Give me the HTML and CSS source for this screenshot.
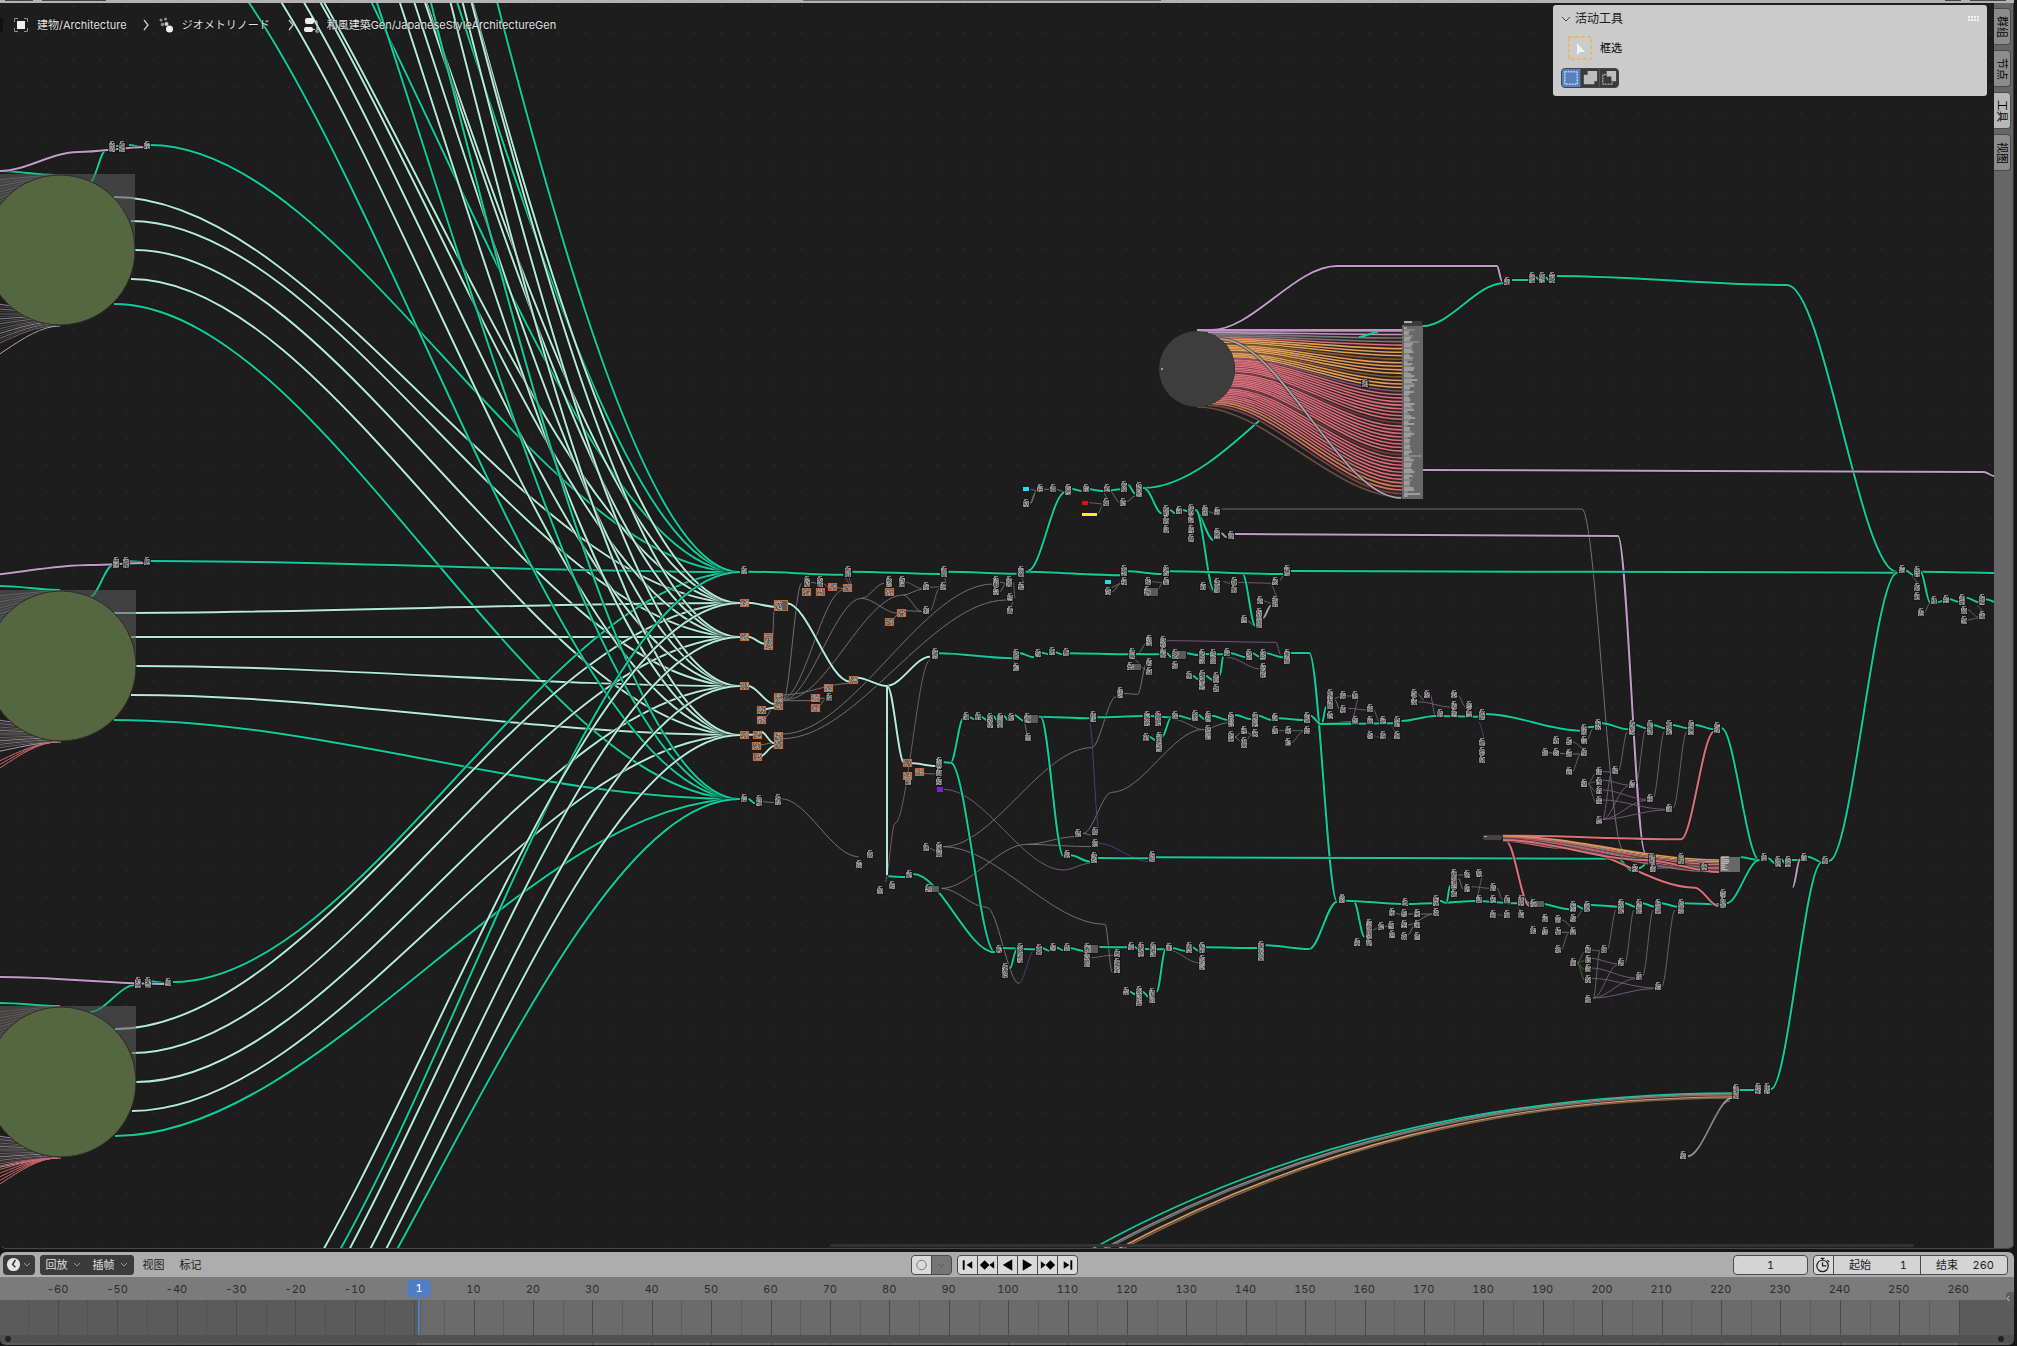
FILE: index.html
```html
<!DOCTYPE html>
<html lang="zh-CN">
<head>
<meta charset="utf-8">
<title>Geometry Nodes</title>
<link rel="stylesheet" href="styles.css">
</head>
<body>
<div class="topbar"><i class="stub stub-a"></i><i class="stub stub-b"></i><i class="stub stub-c"></i><i class="stub stub-d"></i><i class="stub stub-e"></i></div>

<main class="editor">
  <section class="canvas">
    <svg class="graph" id="graph" aria-hidden="true"></svg>
    <nav class="crumbs" lang="ja">
      <i class="edge"></i>
      <a href="#object"><svg class="icon" viewBox="0 0 16 16"><path d="M1.5 5V1.5H5M11 1.5h3.500V5M14.500 11v3.500H11M5 14.500H1.500V11" fill="none" stroke="#8f8f8f"/><rect x="4" y="4" width="8" height="8" fill="#eee"/></svg><span>建物/Architecture</span></a>
      <svg class="sep" viewBox="0 0 8 12"><path d="M2 1l4 5-4 5" fill="none" stroke="#ccc" stroke-width="1.300"/></svg>
      <a href="#modifier"><svg class="icon" viewBox="0 0 16 16"><g fill="#8c8c8c"><circle cx="3" cy="3" r="1.500"/><circle cx="7.500" cy="2" r="1.500"/><circle cx="4.500" cy="7.500" r="1.800"/></g><circle cx="8.500" cy="7" r="2" fill="#ccc"/><circle cx="11.500" cy="12" r="3.500" fill="#eee"/></svg><span>ジオメトリノード</span></a>
      <svg class="sep sep-far" viewBox="0 0 8 12"><path d="M2 1l4 5-4 5" fill="none" stroke="#ccc" stroke-width="1.300"/></svg>
      <a href="#tree"><svg class="icon" viewBox="0 0 16 16"><rect x="2" y="1" width="9" height="6" rx="2" fill="#eee"/><rect x="1" y="10" width="9" height="5" rx="2" fill="#eee"/><path d="M11 4h3v5M10 12.500h2M13 11h2v2h-2v2h3" fill="none" stroke="#ccc"/></svg><span>和風建築Gen/JapaneseStyleArchitectureGen</span></a>
    </nav>
    <aside class="panel">
      <h2><svg class="chev" viewBox="0 0 10 8"><path d="M1 2l4 4 4-4" fill="none" stroke="#444"/></svg>活动工具<i class="grip"></i></h2>
      <p class="tool"><svg class="tool-icon" viewBox="0 0 24 24"><rect x="1" y="1" width="22" height="22" fill="none" stroke="#f0b256" stroke-width="1.500" stroke-dasharray="4 2"/><path d="M9 7v12l3-3h5z" fill="#f2f2f2"/></svg>框选</p>
      <div class="modes">
        <button type="button" class="on" title="Set"><svg viewBox="0 0 19 19"><rect x="3" y="3" width="13" height="13" fill="none" stroke="#fff" stroke-dasharray="2 1"/></svg></button>
        <button type="button" title="Extend"><svg viewBox="0 0 19 19"><path d="M7 2h10v11h-3v3H3V6h4z" fill="#bdbdbd"/></svg></button>
        <button type="button" title="Subtract"><svg viewBox="0 0 19 19"><path d="M7 2h10v11h-5V8H7z" fill="#bdbdbd"/><path d="M6 6H3v10h10v-2" fill="none" stroke="#ddd" stroke-dasharray="2 1"/></svg></button>
      </div>
    </aside>
    <i class="hscroll"></i>
  </section>
  <div class="tabs">
    <button type="button">群组</button><button type="button">节点</button><button type="button" class="on">工具</button><button type="button">视图</button>
  </div>
</main>

<section class="timeline">
  <header class="bar">
    <div class="menus">
      <button type="button" class="dark kind" title="Editor type"><svg class="clock" viewBox="0 0 16 16"><circle cx="8" cy="8" r="7" fill="#e6e6e6"/><path d="M10 3L7 8l3 3" fill="none" stroke="#333" stroke-width="1.600"/></svg><svg class="chev" viewBox="0 0 10 8"><path d="M2 2l3 3 3-3" fill="none" stroke="#999"/></svg></button>
      <div class="pair">
        <button type="button" class="dark">回放<svg class="chev" viewBox="0 0 10 8"><path d="M2 2l3 3 3-3" fill="none" stroke="#999"/></svg></button><button type="button" class="dark">插帧<svg class="chev" viewBox="0 0 10 8"><path d="M2 2l3 3 3-3" fill="none" stroke="#999"/></svg></button>
      </div>
      <button type="button" class="plain">视图</button>
      <button type="button" class="plain">标记</button>
    </div>
    <div class="transport">
      <div class="group">
        <button type="button" title="Auto keying"><svg viewBox="0 0 20 20"><circle cx="10" cy="10" r="5" fill="none" stroke="#777"/></svg></button><button type="button" class="off" title="Keying options"><svg viewBox="0 0 20 20"><path d="M7 9l3 3 3-3" fill="none" stroke="#555"/></svg></button>
      </div>
      <div class="group">
        <button type="button" title="First"><svg viewBox="0 0 20 20"><path d="M5 5h2v10H5zM15 6v8l-6-4z"/></svg></button><button type="button" title="Previous key"><svg viewBox="0 0 20 20"><path d="M7 5l5 5-5 5-5-5zM17 6v8l-5-4z"/></svg></button><button type="button" title="Reverse"><svg viewBox="0 0 20 20"><path d="M15 4v12L5 10z"/></svg></button><button type="button" title="Play"><svg viewBox="0 0 20 20"><path d="M5 4v12l10-6z"/></svg></button><button type="button" title="Next key"><svg viewBox="0 0 20 20"><path d="M13 5l5 5-5 5-5-5zM3 6v8l5-4z"/></svg></button><button type="button" title="Last"><svg viewBox="0 0 20 20"><path d="M13 5h2v10h-2zM6 6v8l6-4z"/></svg></button>
      </div>
    </div>
    <div class="range">
      <input class="current" type="text" value="1" aria-label="Current frame">
      <div class="group">
        <button type="button" title="Preview range"><svg viewBox="0 0 20 20"><circle cx="9" cy="11" r="6" fill="none" stroke="#222" stroke-width="1.300"/><path d="M9 7v4h4M7 3h4M9 3v2M14 5l2 2" fill="none" stroke="#222" stroke-width="1.300"/></svg></button>
        <label><span>起始</span><input type="text" value="1"></label>
        <label><span>结束</span><input type="text" value="260"></label>
      </div>
    </div>
  </header>
  <div class="dope">
    <div class="frames">
      <div class="ruler" id="ruler"></div>
      <div class="cells" id="cells"></div>
      <div class="playhead"><b>1</b></div>
    </div>
    <div class="scroll"></div>
    <i class="flap">‹</i>
  </div>
</section>
<script src="graph.js"></script>
</body>
</html>
```

FILE: styles.css
```css
* { box-sizing: border-box; }
body {
  margin: 0; height: 100vh; overflow: hidden; background: #161616;
  display: flex; flex-direction: column;
  font: 11px/16px Inter, "Noto Sans CJK SC", sans-serif; color: #1c1c1c;
  font-variant-numeric: tabular-nums;
}
button, input { font: inherit; font-variant-numeric: inherit; color: inherit; margin: 0; padding: 0; border: 0; }
button { display: flex; align-items: center; justify-content: center; }
a { color: inherit; text-decoration: none; }

.topbar { flex: none; height: 3px; margin-right: 3px; background: #b3b3b3; position: relative; }
.stub { position: absolute; top: 0; height: 1px; background: #444; }
.stub-a { left: 5px; width: 28px; }
.stub-b { left: 42px; width: 64px; }
.stub-c { left: 803px; width: 358px; background: #666; }
.stub-d { right: 53px; width: 16px; }
.stub-e { right: 8px; width: 36px; }

.editor { flex: 1; min-height: 0; display: flex; margin-right: 3px; border-bottom: 1px solid #484848; border-radius: 0 0 6px 6px; overflow: hidden; }
.canvas { flex: 1; min-width: 0; position: relative; overflow: hidden; background: #1d1d1d; }
.graph { display: block; width: 100%; height: 100%; }
.hscroll { position: absolute; left: 830px; right: 80px; bottom: 1px; height: 3px; background: #333; border-radius: 2px; }

.crumbs {
  position: absolute; left: 0; top: 14px; display: flex; align-items: center; color: #e3e3e3;
  font-family: Inter, "Noto Sans CJK JP", sans-serif; text-shadow: 0 0 2px #000;
}
.crumbs a { display: flex; align-items: center; gap: 8px; }
.edge { width: 3px; height: 14px; margin-right: 10px; background: #111; }
.icon { width: 16px; height: 16px; }
.sep { width: 8px; height: 12px; margin: 0 8px 0 15px; }
.sep-far { margin: 0 8px 0 17px; }

.panel { position: absolute; right: 7px; top: 2px; width: 434px; padding: 6px 8px 8px; background: #cbcbcb; border-radius: 3px; }
.panel h2 { margin: 0 0 9px; display: flex; align-items: center; gap: 4px; font: 12px/16px Inter, "Noto Sans CJK SC", sans-serif; }
.chev { width: 10px; height: 8px; }
.grip { margin-left: auto; width: 11px; height: 6px; background: radial-gradient(circle at 1px 1px, #f4f4f4 0 1px, transparent 1px) 0 0 / 3px 3px; }
.tool { margin: 0 0 8px 7px; height: 24px; display: flex; align-items: center; gap: 8px; color: #000; }
.tool-icon { width: 24px; height: 24px; }
.modes { display: flex; width: 58px; gap: 1px; background: #555; border: 1px solid #444; border-radius: 4px; overflow: hidden; }
.modes button { flex: 1; height: 18px; background: #3a3a3a; }
.modes .on { background: #5680c2; }
.modes svg { width: 18px; height: 18px; }

.tabs { flex: none; width: 20px; padding-top: 5px; background: #666; display: flex; flex-direction: column; gap: 5px; border-right: 1px solid #333; }
.tabs button { width: 17px; height: 37px; background: #8c8c8c; border: 1px solid #4a4a4a; border-left: 0; border-radius: 0 4px 4px 0; writing-mode: vertical-rl; text-orientation: sideways; color: #000; }
.tabs .on { background: #b8b8b8; }

.timeline { flex: none; margin: 3px 3px 1px 0; border-radius: 6px; overflow: hidden; }
.bar { height: 25px; padding: 0 6px 0 3px; background: #adadad; display: flex; align-items: center; justify-content: space-between; }
.menus { display: flex; align-items: center; margin-right: 46px; }
.dark { height: 20px; background: #3b3b3b; color: #e0e0e0; border-radius: 4px; }
.kind { width: 32px; gap: 1px; margin-right: 5px; }
.clock { width: 15px; height: 15px; }
.pair { display: flex; margin-right: 1px; background: #3b3b3b; border-radius: 4px; }
.pair .dark { width: 47px; gap: 4px; }
.plain { height: 20px; width: 37px; background: none; }
.transport, .range { display: flex; gap: 5px; }
.group { display: flex; height: 20px; gap: 1px; background: #4a4a4a; border: 1px solid #4a4a4a; border-radius: 4px; overflow: hidden; }
.group button { width: 19px; height: 18px; background: #dadada; }
.group svg { width: 20px; height: 20px; }
.group .off { background: #757575; }
.current { width: 75px; height: 20px; text-align: center; background: #d4d4d4; border: 1px solid #4a4a4a; border-radius: 4px; }
.range label { display: flex; align-items: center; width: 86px; height: 18px; padding: 0 13px 0 15px; background: #d4d4d4; }
.range label span { flex: none; white-space: nowrap; }
.range label input { flex: 1; width: 0; min-width: 0; background: none; text-align: right; }

.dope { position: relative; height: 68px; background: #5b5b5b; }
.dope::before { content: ""; position: absolute; left: 0; right: 0; top: 0; height: 23px; background: #7b7b7b; }
.frames { position: relative; margin: 0 26px 0 28px; }
.ruler { position: relative; display: flex; height: 23px; align-items: center; color: #2c2c2c; }
.ruler span { flex: 1; text-align: center; }
.cells { display: flex; height: 45px; }
.cells i { flex: 1; border-left: 1px solid #5d5d5d; background: #6b6b6b; }
.cells i:nth-child(even) { border-left-color: #4a4a4a; }
.cells .out { background: #5b5b5b; border-left-color: #525252; }
.cells .first { background: linear-gradient(90deg, #5b5b5b 20%, #6b6b6b 20%); }
.playhead { position: absolute; left: 20%; top: 3px; width: 24px; height: 65px; margin-left: -13px; background: linear-gradient(#527cc4, #527cc4) 50% 0 / 2px 100% no-repeat; }
.playhead b { display: block; height: 17px; background: #527cc4; border-radius: 4px; color: #fff; font-weight: 400; text-align: center; }
.scroll { position: absolute; left: 0; right: 0; bottom: 2px; height: 8px; background: #525252; }
.scroll::before, .scroll::after { content: ""; position: absolute; top: 1px; width: 6px; height: 6px; border-radius: 3px; background: #222; }
.scroll::before { left: 5px; }
.scroll::after { right: 10px; }
.flap { position: absolute; right: 0; top: 15px; width: 8px; height: 14px; background: #5e5e5e; border-radius: 4px 0 0 4px; color: #bbb; font-style: normal; line-height: 12px; }
```

FILE: graph.js
```js
const NS = 'http://www.w3.org/2000/svg';
const svg = document.getElementById('graph');
const COLORS = {
  green: ['#12cb9b', 2], pale: ['#b4ebd7', 2], pink: ['#c39bca', 2], red: ['#de6f79', 2],
  orange: ['#dd9c55', 1], gray: ['#797979', 1], mauve: ['#77607c', 1], blue: ['#484680', 1], leaf: ['#4d6c44', 1], silver: ['#a2a2a2', 2]
};
function add(name, attrs, parent) {
  const el = document.createElementNS(NS, name);
  for (const k in attrs) el.setAttribute(k, attrs[k]);
  (parent || world).appendChild(el);
  return el;
}
const defs = add('defs', {}, svg);
const dots = add('pattern', { id: 'dots', width: 27, height: 27, patternUnits: 'userSpaceOnUse' }, defs);
add('rect', { x: 18, y: 5, width: 2, height: 2, fill: '#262626' }, dots);
const world = add('g', { transform: 'translate(0 -3)' }, svg);
add('rect', { width: 4000, height: 3000, fill: 'url(#dots)' });

// A noodle leaves and enters its sockets horizontally.
function curve(points) {
  let d = 'M' + points[0];
  for (let i = 1; i < points.length; i++) {
    const [a, b] = points[i - 1], [c, e] = points[i], h = (c - a) / 3;
    d += `C${a + h} ${b} ${c - h} ${e} ${c} ${e}`;
  }
  return d;
}
function noodle(points, kind) {
  const [color, width] = COLORS[kind], d = curve(points);
  if (width > 1) add('path', { d, fill: 'none', stroke: '#111', 'stroke-width': width + 1.6, 'stroke-opacity': .6 });
  add('path', { d, fill: 'none', stroke: color, 'stroke-width': width > 1 ? 2 : .9 });
}
function links(ox, oy, k, kind, text) {
  text.trim().split('|').forEach(t => {
    const n = t.trim().split(/[ ,]+/).map(Number), pts = [];
    for (let i = 0; i < n.length; i += 2) pts.push([ox + n[i] / k, oy + n[i + 1] / k]);
    noodle(pts, kind);
  });
}
let seed = 7;
const rnd = () => (seed = (seed * 16807) % 2147483647) / 2147483647;
const SIZES = { s: [6, 6], m: [6, 9], t: [6, 13], x: [6, 18], w: [14, 8], o: [7, 6], O: [7, 15], W: [12, 9], l: [14, 6] };
const nodeLayer = [];
function nodes(ox, oy, k, type, text) {
  text.trim().split(/\s+/).forEach(p => {
    const [x, y] = p.split(',').map(Number), [w, h] = SIZES[type];
    nodeLayer.push([Math.round(ox + x / k - w / 2), Math.round(oy + y / k - h / 2), w, h, 'oOW'.includes(type)]);
  });
}
function paintNodes() {
  const shadow = [], body = [], light = [], dim = [], ring = [];
  for (const [x, y, w, h, hot] of nodeLayer) {
    shadow.push(`M${x - 1} ${y - 1}h${w + 2}v${h + 2}h${-w - 2}z`);
    body.push(`M${x} ${y}h${w}v${h}h${-w}z`);
    if (!hot) dim.push(`M${x + 1} ${y - 2}h4v1h-4zM${x + 1} ${y - 1}h2v1h-2z`);
    for (let j = 0; j < h; j++) {
      for (let i = 0; i < Math.min(w, 7); i++) {
        const r = rnd();
        if (r < .24) light.push(`M${x + i} ${y + j}h1v1h-1z`);
        else if (r < .68) dim.push(`M${x + i} ${y + j}h1v1h-1z`);
      }
    }
    if (hot) ring.push(`M${x - 1} ${y - 1}h${w + 1}v${h + 1}h${-w - 1}z`);
  }
  add('path', { d: shadow.join(''), fill: '#141414', 'fill-opacity': .7 });
  add('path', { d: body.join(''), fill: '#5a5a5a' });
  add('path', { d: dim.join(''), fill: '#7f7f7f' });
  add('path', { d: light.join(''), fill: '#a2a2a2' });
  add('path', { d: ring.join(''), fill: 'none', stroke: '#cc672f', 'stroke-width': 1.2, transform: 'translate(.5 .5)' });
}
function line(x1, y1, x2, y2, stroke, w) {
  add('path', { d: curve([[x1, y1], [x2, y2]]), fill: 'none', stroke, 'stroke-width': w || 1 });
}

// Six outputs of every building part run to six join nodes.
const joins = [572, 603, 637, 686, 735, 799];
const rise = [-105, -53, -29, 0, 29, 54];
const startX = [150, 114, 131, 135, 131, 114];
[[250, 0], [666, 0], [1082, 1], [-166, 0], [-582, -14], [-998, -30], [1498, 20]].forEach(([cy, dx], g) => {
  rise.forEach((r, i) => {
    let x = startX[i] + dx, y = cy + r;
    if (g === 3) x -= 5;
    if (i === 0 && (g === 2 || g === 6)) { x += 22; y += 5; }
    noodle([[x, y], [740, joins[i]]], i % 5 ? 'pale' : 'green');
  });
});
links(0, 0, 1, 'green', '0,171 55,175|90,182 106,150|0,586 60,590|90,597 113,565|0,1003 60,1006|90,1012 135,985|116,146 122,146|129,145 142,147|126,561 142,562|148,981 165,983');
const fills = ['#6b6b6b', '#57505a', '#7a6c7c', '#4a4a4a'];
[[250, 60], [666, 61], [1082, 61]].forEach(([cy, cx], g) => {
  for (let i = 0; i < 13; i++) line(-40, cy - 68 + i * 4, cx + 4, cy - 75 + i, g === 2 ? ['#6e5046', '#5a484a', '#7a5a60'][i % 3] : fills[i % 4]);
  for (let i = 0; i < 17; i++) line(-60, cy + 48 + i * (g ? 2.5 : 4), cx - 4, cy + 60 + i, ['#9b7fa0', '#4a4a4a', '#7a7a7a', '#444', '#775f68', '#3f5a42'][i % 6]);
  line(-50, cy + (g ? 92 : 125), cx, cy + 76, '#a5a5a5', 1);
  if (g) for (let i = 0; i < g * 3; i++) line(-55, cy + 126 - i * 7, cx - 3, cy + 76, '#cf6670', 1);
  add('rect', { x: 0, y: cy - 76, width: cx + 75, height: 76, fill: '#5a5a5a', 'fill-opacity': .6 });
  add('circle', { cx, cy, r: 75, fill: '#566640', stroke: '#2a2a2a' });
});
noodle([[0, 171], [78, 152], [147, 147]], 'pink');
noodle([[-40, 577], [90, 565], [147, 563]], 'pink');
noodle([[0, 977], [168, 984]], 'pink');
nodes(0, 0, 1, 'm', '112,147 122,147 116,563 126,563 138,983 148,983');
nodes(0, 0, 1, 's', '147,146 147,562 168,983');

// Parameter fan on the upper right.
links(0, 0, 1, 'green', '1143,488 1400,331|1423,326 1504,283|1512,280 1529,280|1535,277 1541,281|1545,277 1550,281|1557,276 1787,285 1897,572');
noodle([[1211, 330], [1337, 266], [1497, 266]], 'pink');
noodle([[1497, 266], [1502, 281]], 'pink');
add('path', { d: 'M1198 330H1402V498C1334 498 1300 408 1198 408z', fill: '#30201f' });
for (let i = 0; i < 48; i++) {
  const t = i / 47, y = 331 + t * 76, x = 1197 + Math.sqrt(Math.max(0, 38 * 38 - (y - 369) ** 2));
  let c = i % 9 === 8 ? '#6a3f48' : '#d76e7b';
  if (t < .03) c = '#bf97c6'; else if (t < .07) c = '#777'; else if (t < .1) c = '#d76e7b';
  else if (t < .35) c = i % 5 === 3 ? '#7d5a3a' : '#e0a058'; else if (t < .38) c = '#7b5578';
  else if (t > .97) c = '#6a4c42'; else if (i === 44) c = '#c08848';
  line(x, y, 1402, 331 + t * 166, c, 1.6);
}
line(1197, 330, 1402, 330, '#bf97c6', 2);
line(1359, 337, 1378, 332, '#12cb9b', 2);
noodle([[1220, 339], [1401, 498]], 'silver');
add('circle', { cx: 1197, cy: 369, r: 38, fill: '#3d3d3d' });
add('rect', { x: 1161, y: 368, width: 2, height: 2, fill: '#999' });
add('rect', { x: 1402, y: 325, width: 21, height: 174, fill: '#686868' });
add('rect', { x: 1404, y: 321, width: 18, height: 5, fill: '#3c3c3c' });
add('rect', { x: 1404, y: 321, width: 8, height: 2, fill: '#aaa' });
for (let y = 328; y < 497; y += 2) line(1404, y, 1407 + rnd() * (y % 19 ? 8 : 16), y, y % 3 ? '#c0c0c0' : '#999', 1.2);
nodes(0, 0, 1, 's', '1507,282 1365,384');
nodes(0, 0, 1, 'm', '1532,278 1542,278 1552,278');
noodle([[1423, 470], [1984, 472], [1994, 476]], 'pink');
noodle([[1222, 509], [1582, 509], [1623, 850]], 'gray');
noodle([[1235, 534], [1618, 536], [1645, 852]], 'pink');

// Roof and beam selection.
let f = [700, 540, 3];
links(...f, 'gray', '250,480 305,130|250,475 430,150|250,465 450,430|250,482 333,482|250,480 485,175 552,130|485,175 593,220|260,478 610,165 665,148|610,165 665,215|247,582 880,132|247,596 920,180|218,290 222,215|243,776 475,950|188,785 222,788|330,126 350,130|370,130 385,142|405,142 430,146|577,240 592,225|617,212 665,214|193,535 222,500|360,475 374,475|355,500 374,480|178,615 222,608|899,126 917,130|899,155 917,132');
links(...f, 'mauve', '445,108 455,135|433,112 455,140|733,108 740,140|690,142 720,140|617,127 665,145|690,212 718,145|963,108 975,135|940,127 945,175|690,360 585,850 555,1026|940,185 930,210');
links(...f, 'green', '145,95 430,104|457,95 720,102|745,95 950,101|977,95 1260,106|145,777 165,790');
links(...f, 'pale', '145,188 222,200|260,190 450,425|472,413 560,438 690,350|563,440 612,668|145,290 192,311|145,438 222,492|145,584 160,584|183,575 222,610|180,650 222,618|192,508 222,503|636,670 708,678');
add('path', { d: 'M887 686V875', stroke: '#b2e8d5', 'stroke-width': 2 });
nodes(...f, 's', '132,92 677,142 730,140 962,140 888,155 930,175 930,212 677,212 386,475 132,776');
nodes(...f, 'm', '445,96 733,96 963,96 320,126 360,128 566,126 605,127 888,126 928,127 176,785 234,782');
nodes(...f, 'o', '320,156 360,157 396,142 441,143 567,156 567,246 132,189 132,291 132,439 183,510 183,540 384,445 345,505 132,584 168,618 172,650 622,669 622,707 658,697 345,475 461,420 171,584 605,218');
nodes(...f, 'W', '242,197');
nodes(...f, 'O', '204,305 234,485 234,600');
nodes(0, 0, 1, 's', '859,865 870,855 880,891 892,886');

// Upper details chain.
f = [1000, 460, 3];
links(...f, 'gray', '92,88 110,92|92,130 110,92|130,88 150,88|168,88 192,95|330,95 362,130|380,125 405,108|90,130 105,100|335,382 362,370|335,396 362,372|625,155 642,160|741,482 765,498|840,360 852,345|790,475 812,435');
links(...f, 'mauve', '268,128 308,132|295,160 308,135|308,95 328,125|457,365 487,368|470,395 487,370|670,365 690,370|712,367 815,370|812,375 838,420|791,423 815,430|497,165 497,180|573,165 573,230');
links(...f, 'blue', '622,378 642,400');
links(...f, 'green', '85,332 195,97|217,87 245,93|267,88 310,93 362,88|385,75 405,100|435,87 485,160|510,150 525,160|548,150 562,153|585,150 640,240|588,150 642,392|728,342 766,498|260,343 360,346|383,334 485,342|508,334 850,342|873,333 2685,338');
links(...f, 'silver', '664,220 680,232|790,473 812,437');
nodes(...f, 's', '79,132 120,88 158,88 257,86 320,86 370,128 317,130 497,183 497,210 536,153 573,180 573,210 573,237 652,155 692,228 372,365 323,396 445,365 497,365 609,380 702,367 702,390 824,367 781,423 731,481');
nodes(...f, 'm', '205,90 372,82 497,153 573,150 615,155 652,223 372,335 497,335 862,335 824,428');
nodes(...f, 't', '417,92 652,378'); nodes(...f, 'x', '778,478'); nodes(...f, 'w', '452,397');

// Centre.
f = [900, 600, 3];
links(...f, 'gray', '130,740 575,443 648,290|130,740 615,973 637,1118|125,865 380,733 525,710|380,733 575,740|125,865 260,922 357,1150|550,700 635,577 910,388 985,368|670,280 713,283 740,190|697,175 740,210|710,165 740,130|90,745 105,752|550,700 572,705|373,370 383,405|58,520 108,522|1005,410 1030,392 1055,403|1005,412 1030,430 1055,405');
links(...f, 'mauve', '132,568 490,810 570,790|800,122 1128,127 1142,165|982,172 1080,207|820,358 915,390|805,1050 895,1088|575,1073 640,1065|1135,392 1210,392|1173,428 1210,394');
links(...f, 'blue', '568,365 597,690|597,730 745,785|357,1150 403,1050|340,185 362,203');
links(...f, 'green', `117,160 338,175|360,160 402,172|425,158 445,162|466,157 487,163|508,160 688,163|708,162 780,163|800,160 815,172|860,160 895,165|915,162 972,163|992,160 1040,172|1058,160 1078,170|1098,160 1150,172|1172,159 1228,159 1311,905|1228,1047 1311,905
|131,487 152,488 190,355|152,488 285,1057|208,352 225,358|243,350 260,360|280,348 292,362|312,348 325,362|343,345 370,362|415,350 570,355|422,350 490,768|592,352 728,348|750,348 815,352|835,347 875,357|895,345 915,358|935,347 985,360|1005,345 1055,358|1075,347 1115,360|1135,355 1212,360|1232,347 1262,372 1355,367|1266,370 1278,320
|748,410 765,420|787,410 812,355|878,227 895,238|918,228 938,240|960,225 970,168|512,766 570,785|594,774 748,775|768,772 2155,776|308,1044 405,1048|330,1105 350,1048|427,1045 450,1053|470,1043 490,1051|510,1045 555,1053|598,1041 682,1042|703,1040 715,1048|735,1047 797,1048|770,1175 797,1048|818,1045 857,1053|877,1042 895,1052|917,1042 1073,1044|1097,1036 1228,1047|690,1175 705,1183|728,1175 745,1190|1362,905 1393,1010|40,822 285,1057|-35,829 15,831`);
nodes(...f, 's', '349,203 414,162 455,156 497,158 824,197 748,190 748,216 982,158 868,228 948,266 199,350 235,352 334,355 383,415 825,347 1125,355 1221,392 1032,392 1065,403 1125,392 1163,392 1163,428 738,413 776,448 118,518 118,545 24,546 79,745 535,702 584,697 584,731 501,766 28,825 296,1050 460,1045 501,1045 650,1062 692,1040 808,1044 679,1175 1326,899');
nodes(...f, 'm', '105,162 349,165 697,162 789,160 748,125 789,126 661,281 1048,165 1088,165 948,236 580,352 885,350 924,352 994,412 1221,355 1032,430 118,490 582,775 757,773 417,1050 867,1046 906,1046');
nodes(...f, 't', '905,172 940,172 1088,213 1160,172 270,365 301,365 740,357 775,357 924,400 994,360 1065,360 776,420 117,752 562,1082 652,1100 723,1050 758,1050 906,1090 316,1115 755,1190');
nodes(...f, 'x', '906,243 361,1062 1084,1055 716,1192');
nodes(...f, 'w', '838,165 393,357 574,1048'); nodes(...f, 'l', '95,868 703,200');

// Right side assemblies.
f = [1320, 620, 3];
links(...f, 'mauve', `922,335 895,452|977,330 948,492|1033,335 1000,532|1100,335 1060,563|848,598 875,458|848,598 925,498|848,598 978,541|848,598 1035,570|848,480 925,495|848,510 978,538|848,540 1035,568|848,455 875,456
|888,870 862,988|942,870 915,1028|1000,870 968,1068|1065,870 1025,1100|820,1134 840,993|820,1134 893,1034|820,1134 945,1076|820,1134 1001,1106|815,1015 893,1032|815,1044 945,1074|815,1075 1001,1104|815,990 840,993
|118,230 95,300|85,265 140,270|160,268 178,305|331,225 345,285|295,245 395,262|415,228 437,262|490,765 468,835|455,800 510,805|530,803 548,840|780,405 757,455|757,366 800,390|820,325 800,360|745,940 723,990|725,900 768,930|790,868 768,895`);
links(...f, 'gray', '45,235 60,230|45,240 60,270|80,228 98,228|293,222 312,240|415,765 430,765|415,775 430,808|685,398 700,400|720,400 738,402|757,402 780,402|725,937 748,937|160,930 175,922|192,920 204,918|228,880 244,884|263,882 340,882|263,915 340,882|263,945 285,915|1010,745 1140,735');
links(...f, 'blue', '475,305 500,370|210,315 232,340|160,347 180,352|590,860 610,880|530,884 550,886|340,862 360,885');
links(...f, 'leaf', '805,490 828,460|805,490 828,485|805,493 828,515|805,493 828,548|772,1028 795,995|772,1028 795,1022|772,1030 795,1050|772,1030 795,1083');
links(...f, 'green', '0,312 220,310|245,303 345,288 475,290|498,282 780,332|800,322 825,320|846,310 925,328|947,315 978,325|1000,315 1035,325|1058,315 1103,325|1126,315 1182,328|1205,325 1318,720|1262,712 1318,720|1220,850 1318,720|1345,715 1365,730|1385,718 1393,728|1414,720 1443,720|1463,710 1510,728|895,716 935,752|957,745 975,735|76,842 245,852 340,850|360,842 375,848 465,843 595,850|380,846 390,797|612,840 632,852|655,850 748,868|770,858 790,866|812,855 893,860|915,850 945,860|968,850 1003,860|1024,850 1072,860|1092,850 1197,853');
links(...f, 'red', '548,647 1083,658 1182,335|560,665 628,858|550,662 740,685 1125,803 1195,858');
for (let i = 0; i < 9; i++) line(1503, 836 + i * .6, 1719, 860 + i * 1.5, i === 0 || i === 1 ? '#dd9c55' : ['#cf6a77', '#6c4348', '#8a7a7a'][i % 3], 1.3);
noodle([[1503, 840], [1645, 860], [1719, 872]], 'red');
links(...f, 'pink', '1418,802 1440,718');
add('rect', { x: 1483, y: 835, width: 19, height: 5, rx: 2, fill: '#444' });
add('rect', { x: 1484, y: 836, width: 3, height: 1, fill: '#aaa' });
nodes(...f, 's', `31,288 69,228 105,228 69,270 150,266 105,303 150,303 190,303 150,347 190,349 232,347 283,222 321,226 283,247 403,225 403,258 446,258 361,283 403,283 446,283 487,370 487,397 487,420 708,362 746,366 791,362 675,398 708,400 746,402 791,398 747,455 837,455 837,485 837,513 837,543 885,454 937,494 989,537 1046,566 837,604 792,493 944,748 998,748 1152,742 1332,715 1453,715
66,838 254,848 349,880 402,822 440,765 477,762 440,808 520,803 477,840 520,840 562,840 520,884 562,884 603,884 112,968 148,968 183,920 213,918 217,880 253,882 292,882 252,915 292,915 217,944 253,950 292,950 1208,822 675,898 713,900 758,897 640,934 675,935 713,937 758,937 713,990 803,990 803,1020 803,1048 803,1080 851,990 904,1030 957,1071 1013,1102 805,1139 759,1030`);
nodes(...f, 'm', '232,308 487,287 791,330 835,317 1192,325 997,718 1083,717 1374,727 1403,727 349,845 603,845 758,862 802,862 1208,850');
nodes(...f, 't', '936,325 989,325 1046,325 1114,325 904,862 957,862 1013,862 1082,862');
nodes(...f, 'x', '31,240 402,780 148,930'); nodes(...f, 'l', '650,853');

// Output side.
f = [1700, 540, 3];
links(...f, 'green', '618,92 640,105|662,95 960,100|662,95 690,187|712,187 728,183|748,178 778,186|800,173 838,188|857,178 900,190|387,963 592,98');
links(...f, 'mauve', '636,110 660,135|803,210 835,232|803,240 835,234|832,198 858,225|672,218 690,190');
nodes(...f, 's', '605,90 650,143 650,170 662,219 703,183 738,180 793,213 793,243 847,228 376,962');
nodes(...f, 'm', '650,97 787,180 847,182');
links(0, 0, 1, 'green', '1771,1089 1822,862|1738,1090 1755,1090');
[['#12cb9b', 0, 0], ['#8c8c8c', 11, 1], ['#6f6f6f', 14, 2], ['#d99a62', 26, 4], ['#7c6048', 30, 5]].forEach(([stroke, dx, dy]) => {
  add('path', { d: `M${1092 + dx} 1249C${1284 + dx} ${1143 + dy} 1500 ${1094 + dy} 1734 ${1093 + dy}`, fill: 'none', stroke, 'stroke-width': 1.6 });
});
line(1688, 1156, 1732, 1098, '#a9a9a9', 1.5);
line(1688, 1157, 1730, 1101, '#8a6c8c', 1);
nodes(0, 0, 1, 't', '1736,1092'); nodes(0, 0, 1, 'm', '1758,1089 1767,1089'); nodes(0, 0, 1, 's', '1683,1156');
paintNodes();
[[1023, 487, 6, 4, '#20e0ee'], [1105, 580, 6, 4, '#20e0ee'], [1082, 501, 6, 4, '#e01010'], [1082, 513, 15, 3, '#f5f020'], [937, 787, 6, 5, '#7a1fe0'], [1720, 857, 20, 15, '#686868']].forEach(([x, y, width, height, fill]) => add('rect', { x, y, width, height, fill }));
for (let y = 856; y < 871; y++) line(1721, y + .5, 1724 + rnd() * 6, y + .5, y % 2 ? '#b5b5b5' : '#8c8c8c', 1);

// Timeline: one label per ten frames, one cell per five.
const ruler = document.getElementById('ruler'), cells = document.getElementById('cells');
for (let n = -60; n <= 260; n += 10) {
  const s = document.createElement('span');
  if (n) s.textContent = n;
  ruler.appendChild(s);
}
for (let n = -65; n <= 260; n += 5) {
  const c = document.createElement('i');
  if (n < 0 || n >= 260) c.className = 'out';
  if (n === 0) c.className = 'first';
  cells.appendChild(c);
}
```
